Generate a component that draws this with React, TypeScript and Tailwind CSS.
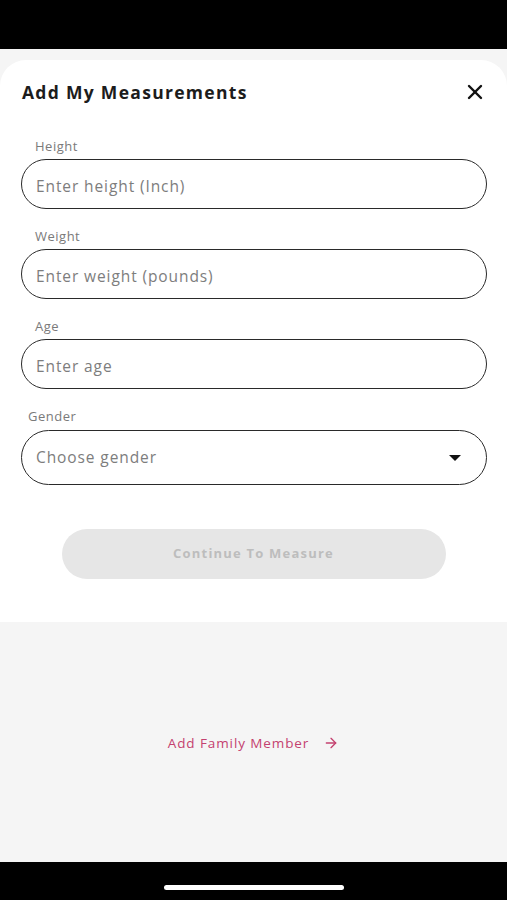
import React from 'react';
import { X, ArrowRight } from 'lucide-react';

const fields = [
  { label: 'Height', placeholder: 'Enter height (Inch)' },
  { label: 'Weight', placeholder: 'Enter weight (pounds)' },
  { label: 'Age', placeholder: 'Enter age' },
];

export default function App() {
  return (
    <div className="w-[507px] h-[900px] flex flex-col bg-[#f5f5f5] font-['Open_Sans',sans-serif] overflow-hidden">
      <div className="h-[49px] bg-black shrink-0" />

      <div className="mt-[11px] bg-white rounded-t-[26px] pt-[20px] pb-[43px]">
        <div className="flex items-center justify-between pl-[22px] pr-[20px] h-[24px]">
          <h1 className="text-[17.5px] font-bold text-[#1c1c1c] tracking-[1.3px]">Add My Measurements</h1>
          <X size={24} strokeWidth={2.4} className="text-[#111]" />
        </div>

        <div className="mt-[33px] pl-[21px] pr-[20px]">
          {fields.map((f, i) => (
            <div key={f.label} className={i > 0 ? 'mt-[18px]' : ''}>
              <div className="pl-[14px] text-[13px] leading-[18px] text-[#7a7a7a] tracking-[0.5px]">{f.label}</div>
              <div className="mt-[4px] h-[50px] rounded-full border-[1.5px] border-[#2a2a2a] flex items-center pl-[14px]">
                <span className="text-[15.5px] text-[#7d7d7d] tracking-[0.9px] mt-[6px]">{f.placeholder}</span>
              </div>
            </div>
          ))}

          <div className="mt-[18px]">
            <div className="pl-[7px] text-[13px] leading-[18px] text-[#7a7a7a] tracking-[0.5px]">Gender</div>
            <div className="mt-[5px] h-[55px] rounded-full border-[1.5px] border-[#2a2a2a] flex items-center justify-between pl-[14px] pr-[24px]">
              <span className="text-[15.5px] text-[#7d7d7d] tracking-[0.9px]">Choose gender</span>
              <svg width="14" height="8" viewBox="0 0 14 8">
                <path d="M1 1 L13 1 L7 7 Z" fill="#111" />
              </svg>
            </div>
          </div>

          <div className="mt-[44px] flex justify-center pr-[1px]">
            <button className="w-[384px] h-[50px] rounded-full bg-[#e6e6e6] text-[13px] font-bold text-[#bdbdbd] tracking-[1.2px]">
              Continue To Measure
            </button>
          </div>
        </div>
      </div>

      <div className="flex-1 flex items-center justify-center">
        <div className="flex items-center gap-[14px] text-[#c4416f] pt-[2px]">
          <span className="text-[13.5px] tracking-[0.9px]">Add Family Member</span>
          <ArrowRight size={16} strokeWidth={2} />
        </div>
      </div>

      <div className="h-[38px] bg-black shrink-0 flex justify-center pt-[23px]">
        <div className="w-[180px] h-[5px] rounded-full bg-white" />
      </div>
    </div>
  );
}
